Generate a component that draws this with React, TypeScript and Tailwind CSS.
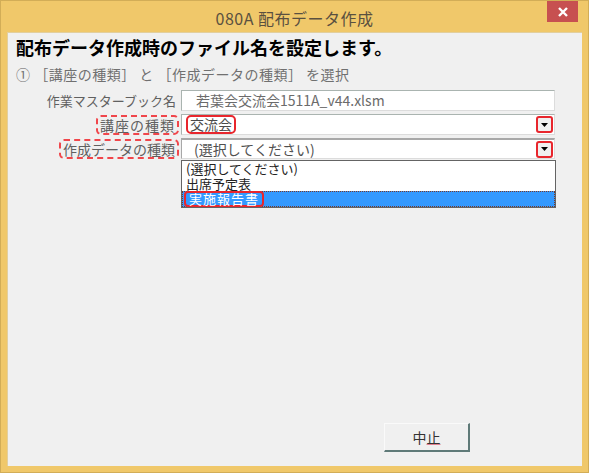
import React from "react";

const jp = { fontFamily: '"Noto Sans CJK JP", "Noto Sans", sans-serif' };

function ArrowButton() {
  return (
    <div className="w-[17px] h-[17px] rounded-[3px] border-2 border-[#e8262d] bg-[#f0f0f0] flex items-center justify-center">
      <svg width="7" height="4" viewBox="0 0 7 4">
        <path d="M0 0 H7 L3.5 4 Z" fill="#000" />
      </svg>
    </div>
  );
}

export default function App() {
  return (
    <div
      className="w-[589px] h-[473px] bg-[#f0c86a] border border-[#d2ad57] flex flex-col"
      style={jp}
    >
      {/* タイトルバー */}
      <div className="relative h-[31px] flex items-center justify-center">
        <span className="text-[16px] text-[#5a5040] pt-[2px] tracking-[0.5px]">080A 配布データ作成</span>
        <div className="absolute right-[10px] top-0 w-[31px] h-[21px] bg-[#c75050] flex items-center justify-center">
          <svg width="10" height="10" viewBox="0 0 10 10">
            <path d="M1 1 L9 9 M9 1 L1 9" stroke="#fff" strokeWidth="2.4" />
          </svg>
        </div>
      </div>

      {/* クライアント領域 */}
      <div className="relative flex-1 ml-[6px] mr-[6px] mb-[6px] bg-[#f0f0f0] border-t border-l border-[#e2cf9e] pl-[8px] flex flex-col">
        <div className="mt-[3px] text-[18px] font-bold text-black leading-[22px]">
          配布データ作成時のファイル名を設定します。
        </div>
        <div className="mt-[6px] text-[14px] text-[#707070] leading-[20px] tracking-[0.5px]">
          ① ［講座の種類］ と ［作成データの種類］ を選択
        </div>

        <div className="mt-[6px] flex flex-col gap-[3px]">
          {/* 作業マスターブック名 */}
          <div className="flex items-center">
            <div className="w-[161px] text-right text-[13px] text-[#606060] leading-[20px] pr-[1px]">
              作業マスターブック名
            </div>
            <div className="ml-[4px] w-[374px] h-[21px] bg-white border border-[#aab4b0] border-r-[#dcdcdc] border-b-[#dcdcdc] flex items-center pl-[14px] text-[14px] text-[#6b6b6b]">
              若葉会交流会1511A_v44.xlsm
            </div>
          </div>

          {/* 講座の種類 */}
          <div className="flex items-center">
            <div className="w-[163px] flex justify-end">
              <span className="border-2 border-dashed border-[#f0464b] rounded-[5px] px-[2px] text-[14px] text-[#606060] leading-[16px] tracking-[1px]">
                講座の種類
              </span>
            </div>
            <div className="ml-[2px] w-[374px] h-[21px] bg-white border border-[#aab4b0] border-r-[#dcdcdc] border-b-[#dcdcdc] flex items-center justify-between pl-[4px] pr-[1px]">
              <span className="border-2 border-[#e8262d] rounded-[5px] px-[2px] text-[14px] text-[#4a4a4a] leading-[15px]">
                交流会
              </span>
              <ArrowButton />
            </div>
          </div>

          {/* 作成データの種類 */}
          <div className="relative flex items-center">
            <div className="w-[163px] flex justify-end">
              <span className="border-2 border-dashed border-[#f0464b] rounded-[5px] px-[2px] text-[14px] text-[#606060] leading-[16px]">
                作成データの種類
              </span>
            </div>
            <div className="ml-[2px] w-[374px] h-[21px] bg-white border border-[#a8a8a8] border-t-2 border-r-[#dcdcdc] border-b-[#dcdcdc] flex items-center justify-between pl-[12px] pr-[1px]">
              <span className="text-[14px] text-[#505050] leading-[16px]">(選択してください)</span>
              <ArrowButton />
            </div>

            {/* ドロップダウンリスト */}
            <div className="absolute left-[165px] top-[22px] w-[375px] bg-white border border-[#646464] flex flex-col text-[13px] leading-[15px]">
              <div className="pl-[4px] h-[15px] text-[#222]">(選択してください)</div>
              <div className="pl-[4px] h-[15px] text-[#222]">出席予定表</div>
              <div className="h-[16px] bg-[#3399ff] border border-dotted border-[#7a3a2a] flex items-center">
                <span className="ml-[1px] border-2 border-[#e8262d] rounded-[4px] px-[3px] text-white leading-[12px] tracking-[1px]">
                  実施報告書
                </span>
              </div>
            </div>
          </div>
        </div>

        <div className="flex-1" />

        {/* ボタン */}
        <div className="flex justify-end pr-[112px] mb-[14px]">
          <div className="w-[86px] h-[29px] bg-[#f0f0f0] border border-[#fafafa] border-r-2 border-b-2 border-r-[#5f7a78] border-b-[#5f7a78] flex items-center justify-center text-[14px] text-[#333]">
            中<span className="underline decoration-[#e08090]">止</span>
          </div>
        </div>
      </div>
    </div>
  );
}
